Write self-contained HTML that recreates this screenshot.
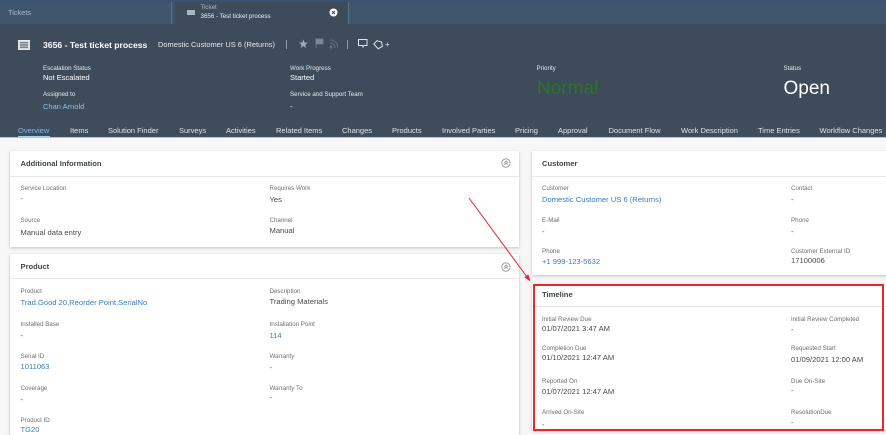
<!DOCTYPE html>
<html><head><meta charset="utf-8"><style>
html,body{margin:0;padding:0;width:886px;height:435px;overflow:hidden}
body{background:#f7f7f7;font-family:"Liberation Sans",sans-serif}
#w{position:absolute;left:0;top:0;width:886px;height:435px;overflow:hidden;filter:blur(.3px)}
.t{position:absolute;white-space:nowrap;line-height:12px;height:12px}
.b{position:absolute}
.h{color:#e6ebf0;font-size:6.2px;margin-top:1px}
.v{color:#fff;font-size:7.5px;margin-top:1px}
.n{color:#dfe5ea;font-size:7.5px;top:125px}
.l{color:#6f6f6f;font-size:6.2px;margin-top:1px}
.d{color:#4a4a4a;font-size:7.6px;margin-top:.5px}
.a{color:#3a7db5;font-size:7.6px;margin-top:.5px}
.c{color:#3f4548;font-size:7.6px;font-weight:bold}
.card{position:absolute;background:#fff;box-shadow:0 1px 3px rgba(0,0,0,.22)}
.card i{position:absolute;left:0;right:0;height:1px;background:#e8e8e8}
</style></head><body><div id="w">
<div class="b" style="left:0;top:0;width:886px;height:24px;background:linear-gradient(#37546f,#3f566f 20%,#3e566e)"></div>
<div class="b" style="left:0;top:24px;width:886px;height:98px;background:#3e4b5a"></div>
<div class="b" style="left:0;top:122px;width:886px;height:16px;background:#3d4d5d"></div>
<div class="b" style="left:0;top:137px;width:886px;height:1px;background:#b9c3cc"></div>
<div class="b" style="left:171px;top:2px;width:1px;height:22px;background:#5f7387"></div>
<div class="b" style="left:175px;top:2px;width:173px;height:22px;background:#3e4b5a"></div>
<div class="b" style="left:348px;top:2px;width:1px;height:22px;background:#5f7387"></div>
<div class="t" style="left:8px;top:7px;font-size:7.4px;color:#a9bccb">Tickets</div>
<div class="b" style="left:187px;top:10px;width:8px;height:5px;background:#aab4bd"></div>
<div class="t" style="left:200.5px;top:2px;font-size:6.2px;color:#aeb9c4">Ticket</div>
<div class="t" style="left:200.5px;top:10.5px;font-size:6.2px;color:#eef1f4">3656 - Test ticket process</div>
<svg class="b" style="left:329px;top:8px" width="9" height="9" viewBox="0 0 9 9"><circle cx="4.5" cy="4.5" r="4" fill="#fff"/><path d="M3 3l3 3M6 3l-3 3" stroke="#3e4b5a" stroke-width="1"/></svg>

<svg class="b" style="left:18px;top:40px" width="12" height="10" viewBox="0 0 12 10"><rect x=".5" y=".5" width="11" height="9" fill="#d3d9de" stroke="#e4e8eb"/><path d="M2 2.8h8M2 5h8M2 7.2h8" stroke="#3e4b5a" stroke-width=".9"/></svg>
<div class="t" style="left:43px;top:39px;font-size:8.65px;font-weight:bold;color:#fff">3656 - Test ticket process</div>
<div class="t" style="left:158px;top:38.5px;font-size:7.45px;color:#e4e9ee">Domestic Customer US 6 (Returns)</div>
<div class="b" style="left:286px;top:40px;width:1px;height:9px;background:#8e9aa6"></div>
<div class="t" style="left:298px;top:36.5px;font-size:12px;line-height:14px;color:#a3afba">★</div>
<svg class="b" style="left:315px;top:38px" width="9" height="10" viewBox="0 0 9 10"><path d="M1 0v10M1 1h7v5H1z" fill="#75889b" stroke="#75889b" stroke-width=".8"/></svg>
<svg class="b" style="left:329px;top:39px" width="9" height="10" viewBox="0 0 9 10" fill="none" stroke="#62727f" stroke-width="1.1"><path d="M1 4a5 5 0 0 1 5 5M1 1a8 8 0 0 1 8 8"/><circle cx="2" cy="8" r="1" fill="#62727f"/></svg>
<div class="b" style="left:347px;top:40px;width:1px;height:9px;background:#8e9aa6"></div>
<svg class="b" style="left:358px;top:39px" width="10" height="10" viewBox="0 0 10 10" fill="none" stroke="#dfe5ea" stroke-width="1"><path d="M.5.5h8.5v6H6L5 8 4.5 6.5H.5z"/></svg>
<svg class="b" style="left:373px;top:40px" width="11" height="10" viewBox="0 0 11 10" fill="none" stroke="#dfe5ea" stroke-width="1"><path d="M4 .7L.8 4l4.4 4.8 4.2-2.6L8.6 2z"/></svg>
<div class="t" style="left:385px;top:39px;font-size:8px;color:#dfe5ea">+</div>

<div class="t h" style="left:43px;top:61.5px">Escalation Status</div>
<div class="t v" style="left:43px;top:71px">Not Escalated</div>
<div class="t h" style="left:43px;top:88px">Assigned to</div>
<div class="t v" style="left:43px;top:100px;color:#8fc3e8">Chan Arnold</div>
<div class="t h" style="left:290px;top:61.5px">Work Progress</div>
<div class="t v" style="left:290px;top:71px">Started</div>
<div class="t h" style="left:290px;top:88px">Service and Support Team</div>
<div class="t v" style="left:290px;top:100px">-</div>
<div class="t h" style="left:536.5px;top:61.5px">Priority</div>
<div class="t" style="left:537px;top:83px;font-size:19px;color:#2a7526">Normal</div>
<div class="t h" style="left:783.5px;top:61.5px">Status</div>
<div class="t" style="left:783.5px;top:83px;font-size:19px;color:#fff">Open</div>

<div class="t n" style="left:18px;color:#7fb6e2">Overview</div>
<div class="b" style="left:18px;top:136px;width:32px;height:2px;background:#9fd0f0"></div>
<div class="t n" style="left:70px">Items</div>
<div class="t n" style="left:108px">Solution Finder</div>
<div class="t n" style="left:179px">Surveys</div>
<div class="t n" style="left:226px">Activities</div>
<div class="t n" style="left:276px">Related Items</div>
<div class="t n" style="left:342px">Changes</div>
<div class="t n" style="left:392px">Products</div>
<div class="t n" style="left:442px">Involved Parties</div>
<div class="t n" style="left:515px">Pricing</div>
<div class="t n" style="left:558px">Approval</div>
<div class="t n" style="left:608.5px">Document Flow</div>
<div class="t n" style="left:681px">Work Description</div>
<div class="t n" style="left:758px">Time Entries</div>
<div class="t n" style="left:819.5px">Workflow Changes</div>

<div class="card" style="left:10px;top:151px;width:509px;height:96px"><i style="top:25px"></i></div>
<div class="card" style="left:10px;top:254px;width:509px;height:190px"><i style="top:24px"></i></div>
<div class="card" style="left:532px;top:151px;width:360px;height:124px"><i style="top:25px"></i></div>
<div class="card" style="left:532px;top:284px;width:360px;height:146px"><i style="top:22px"></i></div>

<div class="t c" style="left:20.5px;top:158px">Additional Information</div>
<svg class="b" style="left:501px;top:158px" width="10" height="10" viewBox="0 0 10 10" fill="none" stroke="#8a8f94" stroke-width=".8"><circle cx="5" cy="5" r="4.2"/><path d="M3 5l2-2 2 2M3 7l2-2 2 2"/></svg>
<div class="t l" style="left:20.5px;top:182px">Service Location</div>
<div class="t d" style="left:20.5px;top:192px">-</div>
<div class="t l" style="left:269.5px;top:182px">Requires Work</div>
<div class="t d" style="left:269.5px;top:193.5px">Yes</div>
<div class="t l" style="left:20.5px;top:214px">Source</div>
<div class="t d" style="left:20.5px;top:226px">Manual data entry</div>
<div class="t l" style="left:269.5px;top:214px">Channel</div>
<div class="t d" style="left:269.5px;top:224px">Manual</div>

<div class="t c" style="left:20.5px;top:261px">Product</div>
<svg class="b" style="left:501px;top:262px" width="10" height="10" viewBox="0 0 10 10" fill="none" stroke="#8a8f94" stroke-width=".8"><circle cx="5" cy="5" r="4.2"/><path d="M3 5l2-2 2 2M3 7l2-2 2 2"/></svg>
<div class="t l" style="left:20.5px;top:285px">Product</div>
<div class="t a" style="left:20.5px;top:296.5px">Trad.Good 20,Reorder Point,SerialNo</div>
<div class="t l" style="left:269.5px;top:285px">Description</div>
<div class="t d" style="left:269.5px;top:295px">Trading Materials</div>
<div class="t l" style="left:20.5px;top:317.5px">Installed Base</div>
<div class="t d" style="left:20.5px;top:329px">-</div>
<div class="t l" style="left:269.5px;top:317.5px">Installation Point</div>
<div class="t a" style="left:269.5px;top:329px">114</div>
<div class="t l" style="left:20.5px;top:349.5px">Serial ID</div>
<div class="t a" style="left:20.5px;top:360.5px">1011063</div>
<div class="t l" style="left:269.5px;top:349.5px">Warranty</div>
<div class="t d" style="left:269.5px;top:361px">-</div>
<div class="t l" style="left:20.5px;top:381.5px">Coverage</div>
<div class="t d" style="left:20.5px;top:393px">-</div>
<div class="t l" style="left:269.5px;top:381.5px">Warranty To</div>
<div class="t d" style="left:269.5px;top:391px">-</div>
<div class="t l" style="left:20.5px;top:413.5px">Product ID</div>
<div class="t a" style="left:20.5px;top:423.5px">TG20</div>

<div class="t c" style="left:542px;top:158px">Customer</div>
<div class="t l" style="left:542px;top:182px">Customer</div>
<div class="t a" style="left:542px;top:193.5px">Domestic Customer US 6 (Returns)</div>
<div class="t l" style="left:791px;top:182px">Contact</div>
<div class="t d" style="left:791px;top:193.5px">-</div>
<div class="t l" style="left:542px;top:214px">E-Mail</div>
<div class="t d" style="left:542px;top:225px">-</div>
<div class="t l" style="left:791px;top:214px">Phone</div>
<div class="t d" style="left:791px;top:225px">-</div>
<div class="t l" style="left:542px;top:244.5px">Phone</div>
<div class="t a" style="left:542px;top:255px">+1 999-123-5632</div>
<div class="t l" style="left:791px;top:244.5px">Customer External ID</div>
<div class="t d" style="left:791px;top:254.5px">17100006</div>

<div class="t c" style="left:542px;top:288.5px">Timeline</div>
<div class="t l" style="left:542px;top:313px">Initial Review Due</div>
<div class="t d" style="left:542px;top:322.5px">01/07/2021 3:47 AM</div>
<div class="t l" style="left:791px;top:313px">Initial Review Completed</div>
<div class="t d" style="left:791px;top:323px">-</div>
<div class="t l" style="left:542px;top:342px">Completion Due</div>
<div class="t d" style="left:542px;top:351.5px">01/10/2021 12:47 AM</div>
<div class="t l" style="left:791px;top:342px">Requested Start</div>
<div class="t d" style="left:791px;top:353.5px">01/09/2021 12:00 AM</div>
<div class="t l" style="left:542px;top:374.5px">Reported On</div>
<div class="t d" style="left:542px;top:385px">01/07/2021 12:47 AM</div>
<div class="t l" style="left:791px;top:374.5px">Due On-Site</div>
<div class="t d" style="left:791px;top:384px">-</div>
<div class="t l" style="left:542px;top:406px">Arrived On-Site</div>
<div class="t d" style="left:542px;top:418px">-</div>
<div class="t l" style="left:791px;top:406px">ResolutionDue</div>
<div class="t d" style="left:791px;top:416px">-</div>

<div class="b" style="left:533px;top:284px;width:347px;height:143px;border:2px solid #e8282d"></div>
<svg class="b" style="left:465px;top:195px" width="70" height="90" viewBox="0 0 70 90"><path d="M4 3L62 82" stroke="#e0282c" stroke-width="1" fill="none"/><path d="M65.5 86.5L59.4 82.4 63.4 79.4z" fill="#e0282c"/></svg>
</div></body></html>
